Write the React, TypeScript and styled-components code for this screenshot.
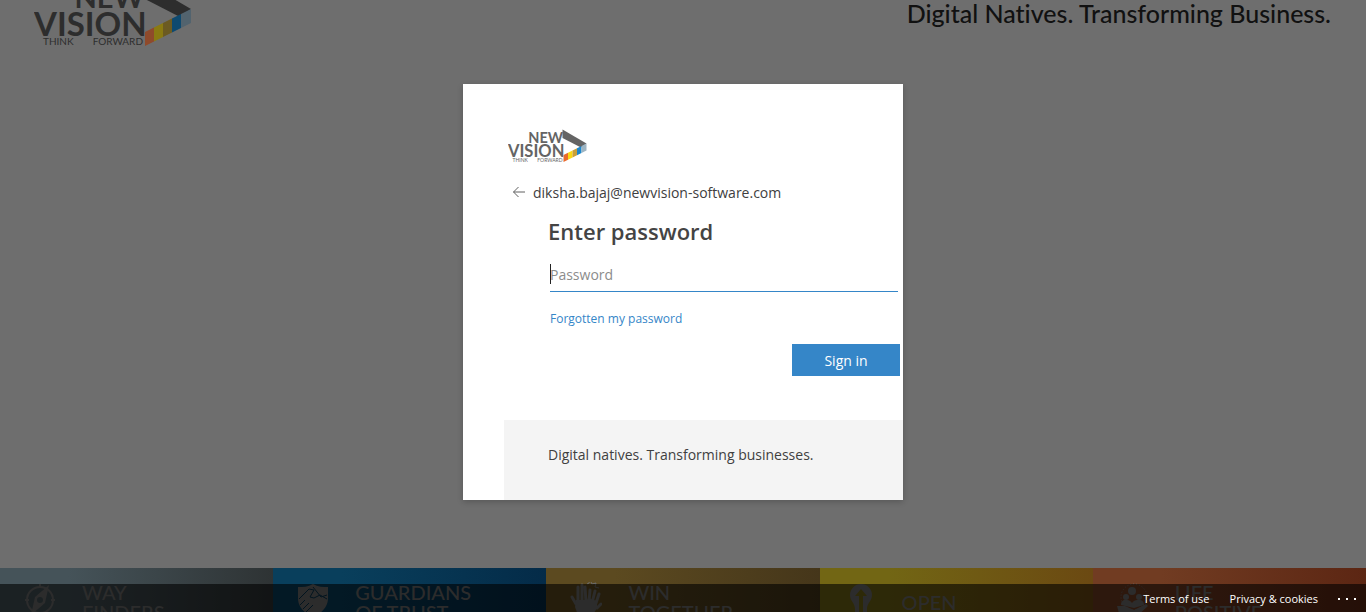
import React from "react";
import styled, { createGlobalStyle } from "styled-components";

const GlobalStyle = createGlobalStyle`
  *, *::before, *::after { box-sizing: border-box; }
  body {
    margin: 0;
    background: #6e6e6e;
    font-family: "Open Sans", "Noto Sans", sans-serif;
    font-size: 14px;
    color: #404040;
  }
`;

const Page = styled.div`
  position: relative;
  display: flex;
  flex-direction: column;
  min-height: 100vh;
  overflow: hidden;
`;

const Header = styled.header`
  display: flex;
  justify-content: space-between;
  align-items: flex-end;
  height: 48px;
  padding: 0 35px 0 34px;
`;

const Tagline = styled.p`
  margin: 0;
  padding-bottom: 21px;
  font-family: Lato, sans-serif;
  font-size: 25px;
  line-height: 28px;
  font-weight: 500;
  font-variant-ligatures: none;
  color: #111111;
  white-space: nowrap;
`;

const Main = styled.main`
  display: flex;
  flex: 1;
  justify-content: center;
  align-items: flex-start;
  padding: 36px 0 68px;
`;

const Card = styled.section`
  display: flex;
  flex-direction: column;
  width: 440px;
  max-width: 100%;
  background: #ffffff;
  box-shadow: 0 2px 6px rgba(0, 0, 0, 0.2);
`;

const Form = styled.form`
  display: flex;
  flex-direction: column;
  padding: 45px 3px 44px 45px;
`;

const Identity = styled.div`
  display: flex;
  align-items: center;
  gap: 4px;
  margin-top: 15px;
  height: 28px;
  font-size: 14px;
`;

const BackButton = styled.button`
  display: flex;
  align-items: center;
  justify-content: center;
  width: 21px;
  height: 24px;
  padding: 0;
  border: 0;
  background: none;
  color: #606060;
`;

const Fields = styled.div`
  display: flex;
  flex-direction: column;
  padding-left: 40px;
`;

const Title = styled.h1`
  margin: 9px 0 0;
  font-size: 22px;
  line-height: 32px;
  font-weight: 600;
  color: #444444;
`;

const InputWrap = styled.div`
  position: relative;
  margin: 11px 2px 0;
`;

const PasswordInput = styled.input`
  display: block;
  width: 100%;
  height: 34px;
  padding: 0;
  border: 0;
  border-bottom: 1px solid #3586c8;
  outline: 0;
  background: transparent;
  font: inherit;
  font-size: 14px;
  color: #404040;

  &::placeholder { color: #8c8c8c; opacity: 1; }
`;

const Caret = styled.span`
  position: absolute;
  left: 0;
  top: 6px;
  width: 1px;
  height: 20px;
  background: #222222;
`;

const HelpLink = styled.a`
  align-self: flex-start;
  margin: 17px 2px 0;
  font-size: 12px;
  line-height: 20px;
  color: #3586c8;
  text-decoration: none;
`;

const SubmitButton = styled.button`
  align-self: flex-end;
  width: 108px;
  height: 32px;
  margin-top: 15px;
  padding: 0;
  border: 0;
  background: #3586c8;
  font: inherit;
  font-size: 14px;
  color: #ffffff;
`;

const CardNote = styled.p`
  margin: 0 0 0 41px;
  padding: 25px 44px 35px;
  background: #f4f4f4;
  font-size: 14px;
  line-height: 20px;
`;

const Values = styled.ul`
  display: grid;
  grid-template-columns: repeat(5, 1fr);
  height: 44px;
  margin: 0;
  padding: 0;
  list-style: none;
  overflow: hidden;
`;

const Value = styled.li<{ $from: string; $to: string }>`
  display: flex;
  height: 72px;
  padding: 14px 0 0 24px;
  gap: 26px;
  background: linear-gradient(90deg, ${(p) => p.$from} 25%, ${(p) => p.$to});
  color: #6e6e6e;
`;

const ValueName = styled.span<{ $single?: boolean }>`
  padding-top: ${(p) => (p.$single ? "10px" : "0")};
  font-family: Lato, sans-serif;
  font-size: 20px;
  line-height: 20px;
  font-weight: 500;
  white-space: pre-line;
`;

const Legal = styled.footer`
  position: absolute;
  left: 0;
  right: 0;
  bottom: 0;
  display: flex;
  justify-content: flex-end;
  align-items: center;
  gap: 20px;
  height: 28px;
  padding: 2px 10px 0 0;
  background: rgba(0, 0, 0, 0.6);
`;

const LegalLink = styled.a`
  font-size: 11px;
  line-height: 20px;
  color: #ffffff;
  text-decoration: none;
`;

const MoreButton = styled.button`
  display: flex;
  padding: 0;
  border: 0;
  background: none;
  color: #ffffff;
`;

const brightStripes = ["#ea6a2c", "#fbd914", "#c9a03a", "#1c86cc", "#9db4c2"];
const dimStripes = ["#8f4a2b", "#8a7a12", "#6b5a22", "#0e4a70", "#52636e"];

function Logo({ width, ink, stripes }: { width: number; ink: string; stripes: string[] }) {
  const edges = [111, 120, 129, 138, 147, 157];
  const top = (x: number) => 52 - (x - 111) * 0.5;
  return (
    <svg width={width} height={(width * 68) / 160} viewBox="0 0 160 68" role="img" aria-label="New Vision, Think Forward">
      <g fill={ink} fontFamily="Lato, sans-serif" fontWeight="700">
        <text x="110" y="28" fontSize="29" textAnchor="end">NEW</text>
        <text x="0" y="56" fontSize="33">VISION</text>
        <text x="9" y="65" fontSize="10" fontWeight="400">THINK</text>
        <text x="109" y="65" fontSize="10" fontWeight="400" textAnchor="end">FORWARD</text>
      </g>
      <polygon points="109,1 157,29 146,37 109,18" fill={ink} />
      {stripes.map((color, i) => {
        const a = edges[i];
        const b = edges[i + 1];
        return (
          <polygon
            key={color}
            points={`${a},${top(a)} ${b},${top(b)} ${b},${top(b) + 14} ${a},${top(a) + 14}`}
            fill={color}
          />
        );
      })}
    </svg>
  );
}

const CompassIcon = () => (
  <svg width="32" height="36" viewBox="0 0 32 36" fill="none" stroke="currentColor" strokeWidth="2">
    <circle cx="16" cy="18" r="13" />
    <path d="M16 2v4M1 18h4M27 18h4M16 30v4" />
    <path fillRule="evenodd" fill="currentColor" stroke="none" d="M25 3 21 21 7 33 11 15ZM16 15a3 3 0 1 0 0 6 3 3 0 0 0 0-6Z" />
  </svg>
);

const ShieldIcon = () => (
  <svg width="32" height="36" viewBox="0 0 32 36">
    <path fill="currentColor" d="M16 2c5 3 10 3 15 3v11c0 9-6 15-15 19C7 31 1 25 1 16V5c5 0 10 0 15-3Z" />
    <path fill="none" stroke="#06344f" d="m2 17 10-10 5 1-4 7 4 1 6-3 7 4M3 23l5-5M6 27l6-6M9 30l7-7M16 5l8 10 6-2" />
  </svg>
);

const ClapIcon = () => (
  <svg width="32" height="36" viewBox="0 0 32 36">
    <g fill="none" stroke="currentColor" strokeWidth="3" strokeLinecap="round">
      <path d="M8 20V5M12 20V3M16 20 15 5M6 22l-4-7" />
      <path d="m19 20 1-12M22 21l3-12M25 24l4-12M27 26l4-4" />
    </g>
    <path fill="currentColor" d="M6 18h11l1-2 9 3v7l-6 10H9L5 25Z" />
    <path fill="none" stroke="currentColor" d="m17 2 2-1 1-3 2 4 4-1-1 4 4 1" />
  </svg>
);

const BulbIcon = () => (
  <svg width="32" height="36" viewBox="0 0 32 36">
    <path
      fillRule="evenodd"
      fill="currentColor"
      d="M17 2a11 11 0 0 1 11 11c0 6-5 8-5 14v8H11v-8c0-6-5-8-5-14A11 11 0 0 1 17 2Zm0 5-6 7h4v21h4V14h4Z"
    />
  </svg>
);

const PeopleIcon = () => (
  <svg width="32" height="36" viewBox="0 0 32 36" fill="currentColor">
    <circle cx="15" cy="9" r="4" />
    <circle cx="9" cy="15" r="3" />
    <circle cx="22" cy="15" r="3" />
    <path d="M4 23c0-7 8-6 11-2 3-4 12-5 12 2l-10 3Z" />
    <path d="M0 24h8l9 4 12-6 2 2-12 11H3Z" />
    <circle cx="17" cy="15" r="13" fill="none" stroke="currentColor" strokeDasharray="1 2" />
  </svg>
);

const values = [
  { name: "WAY\nFINDERS", from: "#455359", to: "#2e3334", Icon: CompassIcon },
  { name: "GUARDIANS\nOF TRUST", from: "#093f5c", to: "#042b48", Icon: ShieldIcon },
  { name: "WIN\nTOGETHER", from: "#5c4a20", to: "#45361a", Icon: ClapIcon },
  { name: "OPEN", from: "#726614", to: "#6b4912", Icon: BulbIcon, single: true },
  { name: "LIFE\nPOSITIVE", from: "#713c22", to: "#5c2613", Icon: PeopleIcon },
];

export default function App() {
  return (
    <>
      <GlobalStyle />
      <Page>
        <Header>
          <Logo width={160} ink="#2d2d2d" stripes={dimStripes} />
          <Tagline>Digital Natives. Transforming Business.</Tagline>
        </Header>
        <Main>
          <Card>
            <Form onSubmit={(e) => e.preventDefault()}>
              <Logo width={80} ink="#646464" stripes={brightStripes} />
              <Identity>
                <BackButton type="button" aria-label="Back">
                  <svg width="14" height="12" viewBox="0 0 14 12" fill="none" stroke="currentColor">
                    <path d="M13 6H1.500M6.500 1l-5 5 5 5" />
                  </svg>
                </BackButton>
                <span>diksha.bajaj@newvision-software.com</span>
              </Identity>
              <Fields>
                <Title>Enter password</Title>
                <InputWrap>
                  <PasswordInput type="password" placeholder="Password" aria-label="Password" />
                  <Caret />
                </InputWrap>
                <HelpLink href="#reset">Forgotten my password</HelpLink>
                <SubmitButton type="submit">Sign in</SubmitButton>
              </Fields>
            </Form>
            <CardNote>Digital natives. Transforming businesses.</CardNote>
          </Card>
        </Main>
        <Values>
          {values.map(({ name, from, to, Icon, single }) => (
            <Value key={name} $from={from} $to={to}>
              <Icon />
              <ValueName $single={single}>{name}</ValueName>
            </Value>
          ))}
        </Values>
        <Legal>
          <LegalLink href="#terms">Terms of use</LegalLink>
          <LegalLink href="#privacy">Privacy &amp; cookies</LegalLink>
          <MoreButton type="button" aria-label="More options">
            <svg width="18" height="4" viewBox="0 0 18 4" fill="currentColor">
              <path d="M0 1h2v2H0zM8 1h2v2H8zM16 1h2v2h-2z" />
            </svg>
          </MoreButton>
        </Legal>
      </Page>
    </>
  );
}
